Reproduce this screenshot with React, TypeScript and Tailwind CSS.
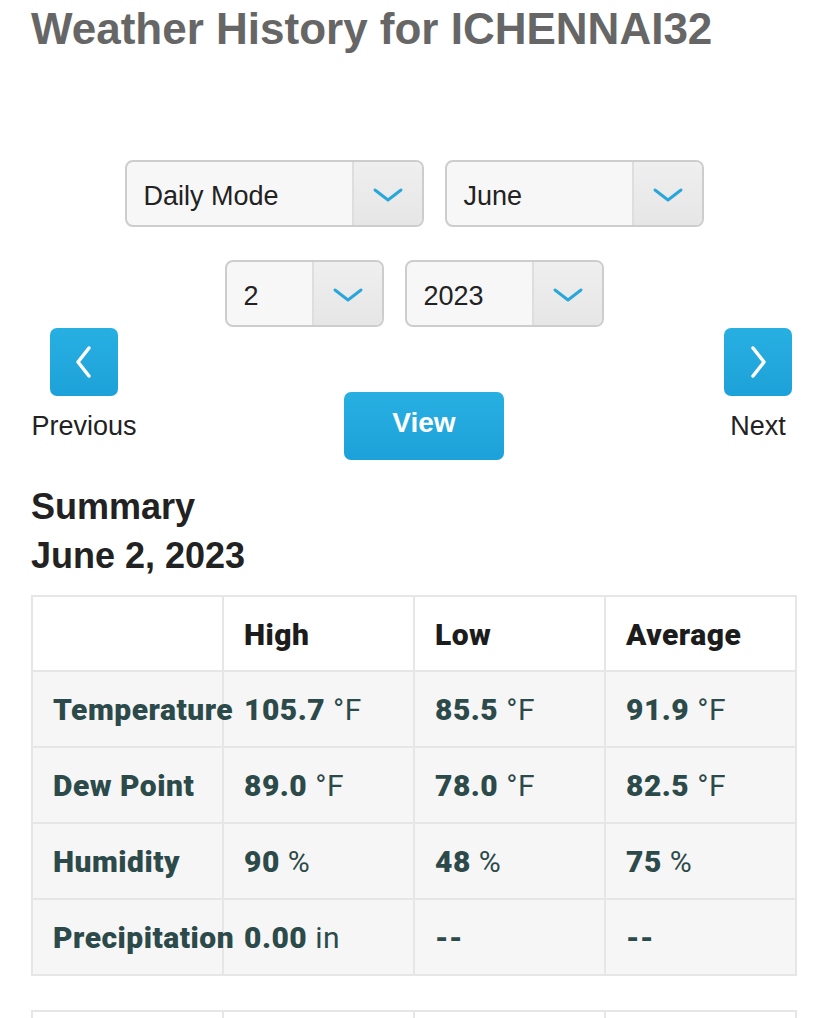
import React from "react";

type Row = {
  label: string;
  high: [string, string];
  low: [string, string];
  avg: [string, string];
};

const rows: Row[] = [
  { label: "Temperature", high: ["105.7", "°F"], low: ["85.5", "°F"], avg: ["91.9", "°F"] },
  { label: "Dew Point", high: ["89.0", "°F"], low: ["78.0", "°F"], avg: ["82.5", "°F"] },
  { label: "Humidity", high: ["90", "%"], low: ["48", "%"], avg: ["75", "%"] },
  { label: "Precipitation", high: ["0.00", "in"], low: ["--", ""], avg: ["--", ""] },
];

function Chevron() {
  return (
    <svg width="32" height="16" viewBox="0 0 32 16" fill="none">
      <polyline
        points="3,3 16,13 29,3"
        stroke="#2aa6d9"
        strokeWidth="3"
        strokeLinecap="round"
        strokeLinejoin="round"
      />
    </svg>
  );
}

function Select({ value, width }: { value: string; width: string }) {
  return (
    <div
      className={`flex h-[67px] ${width} overflow-hidden rounded-[8px] border-2 border-[#cdcdcd] bg-[#f7f7f7]`}
    >
      <div className="flex flex-1 items-center pl-[17px] pt-[6px] text-[27px] text-[#222]">{value}</div>
      <div className="flex w-[70px] items-center justify-center border-l-2 border-[#dedede] bg-gradient-to-b from-[#efefef] to-[#e6e6e6] pt-[2px]">
        <Chevron />
      </div>
    </div>
  );
}

function NavButton({ dir }: { dir: "left" | "right" }) {
  return (
    <div className="flex h-[68px] w-[68px] items-center justify-center rounded-[7px] bg-gradient-to-b from-[#28afe2] to-[#1ca2d8]">
      <svg width="20" height="34" viewBox="0 0 20 34" fill="none">
        <polyline
          points={dir === "left" ? "15,3 4,17 15,31" : "5,3 16,17 5,31"}
          stroke="white"
          strokeWidth="3.5"
          strokeLinecap="round"
          strokeLinejoin="round"
        />
      </svg>
    </div>
  );
}

function Val({ v }: { v: [string, string] }) {
  return (
    <>
      <span className="font-black">{v[0]}</span>
      {v[1] && <span className="font-normal"> {v[1]}</span>}
    </>
  );
}

export default function App() {
  return (
    <div className="min-h-[1100px] bg-white font-['Liberation_Sans',Arial,sans-serif]">
      <h1 className="pl-[31px] pt-[7px] text-[44px] font-bold leading-none text-[#666]">
        Weather History for ICHENNAI32
      </h1>

      <div className="mt-[109px] flex justify-center gap-[21px]">
        <Select value="Daily Mode" width="w-[299px]" />
        <Select value="June" width="w-[259px]" />
      </div>
      <div className="mt-[33px] flex justify-center gap-[21px]">
        <Select value="2" width="w-[159px]" />
        <Select value="2023" width="w-[199px]" />
      </div>

      <div className="mt-px flex items-start pl-[31px] pr-[36px]">
        <div className="flex w-[106px] flex-col items-center">
          <NavButton dir="left" />
          <div className="mt-[15px] whitespace-nowrap text-[27px] leading-[30px] text-[#222]">Previous</div>
        </div>
        <div className="ml-[207px] mt-[64px] flex h-[68px] w-[160px] items-center justify-center rounded-[7px] bg-gradient-to-b from-[#28afe2] to-[#1ca2d8] pb-[6px] text-[28px] font-bold text-white">
          View
        </div>
        <div className="ml-auto flex w-[68px] flex-col items-center">
          <NavButton dir="right" />
          <div className="mt-[15px] text-[27px] leading-[30px] text-[#222]">Next</div>
        </div>
      </div>

      <div className="mt-[22px] pl-[31px] text-[36px] font-bold leading-[49px] text-[#222]">
        <div>Summary</div>
        <div>June 2, 2023</div>
      </div>

      <div className="mt-[15px] px-[31px]">
        <table className="w-full table-fixed border-collapse font-['Roboto',sans-serif] text-[30px] tracking-[0.5px]">
          <thead>
            <tr className="h-[75px] bg-white text-left text-[#1c1c1c]">
              <th className="border-2 border-[#e6e6e6]"></th>
              <th className="border-2 border-[#e6e6e6] pl-[20px] pt-[2px] font-black">High</th>
              <th className="border-2 border-[#e6e6e6] pl-[20px] pt-[2px] font-black">Low</th>
              <th className="border-2 border-[#e6e6e6] pl-[20px] pt-[2px] font-black">Average</th>
            </tr>
          </thead>
          <tbody>
            {rows.map((r) => (
              <tr key={r.label} className="h-[76px] bg-[#f6f6f6] text-[#2c4a4a]">
                <td className="overflow-visible whitespace-nowrap border-2 border-[#e6e6e6] pl-[20px] font-black">
                  {r.label}
                </td>
                <td className="whitespace-nowrap border-2 border-[#e6e6e6] pl-[20px]">
                  <Val v={r.high} />
                </td>
                <td className="whitespace-nowrap border-2 border-[#e6e6e6] pl-[20px]">
                  <Val v={r.low} />
                </td>
                <td className="whitespace-nowrap border-2 border-[#e6e6e6] pl-[20px]">
                  <Val v={r.avg} />
                </td>
              </tr>
            ))}
          </tbody>
        </table>

        <table className="mt-[34px] w-full table-fixed border-collapse">
          <tbody>
            <tr className="h-[75px] bg-white">
              <td className="border-2 border-[#e6e6e6]"></td>
              <td className="border-2 border-[#e6e6e6]"></td>
              <td className="border-2 border-[#e6e6e6]"></td>
              <td className="border-2 border-[#e6e6e6]"></td>
            </tr>
          </tbody>
        </table>
      </div>
    </div>
  );
}
